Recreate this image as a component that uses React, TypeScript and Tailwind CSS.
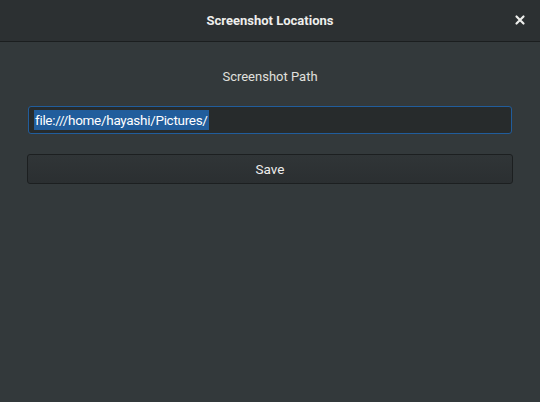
import React from "react";

export default function App() {
  return (
    <div
      className="w-[540px] h-[402px] bg-[#33393b] flex flex-col text-[#eeeeec]"
      style={{ fontFamily: 'Roboto, "Open Sans", sans-serif' }}
    >
      <div className="h-[42px] shrink-0 bg-[#2c3032] border-b border-[#1b1e1f] flex items-center relative">
        <div className="flex-1 text-center text-[13px] font-bold text-[#eeeeec]">Screenshot Locations</div>
        <div className="absolute right-[14px] top-[11px]">
          <svg width="12" height="18" viewBox="0 0 12 18">
            <path d="M2.5 5.5 L9.5 12.5 M9.5 5.5 L2.5 12.5" stroke="#eeeeec" strokeWidth="2.2" strokeLinecap="round" />
          </svg>
        </div>
      </div>
      <div className="flex flex-col px-[27px]">
        <div className="mt-[25px] h-[20px] text-center text-[13px] text-[#e0e0de]">Screenshot Path</div>
        <div className="mt-[19px] h-[28px] mx-[1px] bg-[#272b2c] border border-[#215d9c] rounded-[3px] flex items-center px-[5px]">
          <span className="bg-[#215d9c] text-[#ffffff] text-[13.5px] leading-[20px] tracking-[-0.3px] px-[1px]">file:///home/hayashi/Pictures/</span>
        </div>
        <div className="mt-[20px] h-[30px] bg-gradient-to-b from-[#303537] to-[#2b2f31] border border-[#1c1f20] rounded-[3px] flex items-center justify-center text-[13.5px] text-[#eeeeec]">
          Save
        </div>
      </div>
    </div>
  );
}
